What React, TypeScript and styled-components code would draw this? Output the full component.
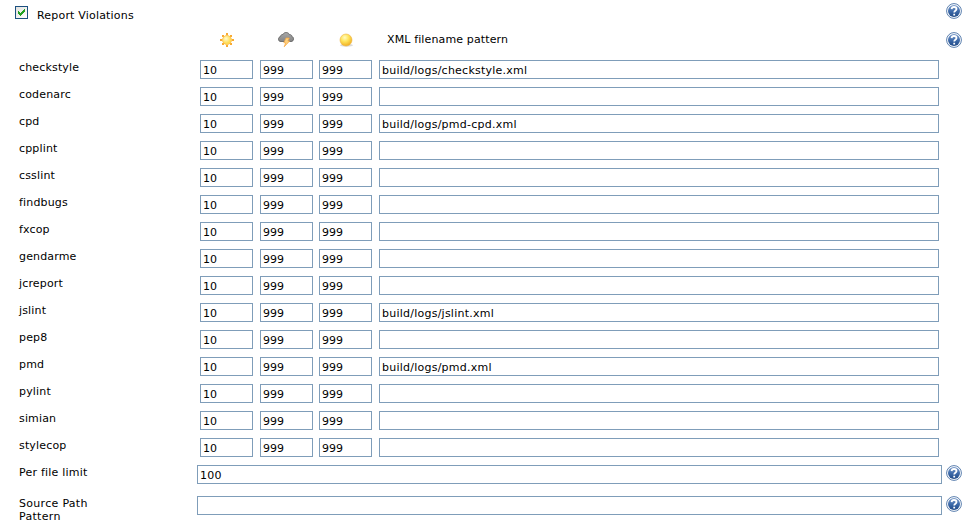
import React from "react";
import styled, { createGlobalStyle } from "styled-components";

const GlobalStyle = createGlobalStyle`
  * { box-sizing: border-box; }
  body {
    margin: 0;
    background: #fff;
    color: #000;
    font: 11px/13px Verdana, "DejaVu Sans", sans-serif;
  }
`;

const Page = styled.form`
  width: 973px;
  height: 531px;
  overflow: hidden;
`;

const TitleRow = styled.div`
  display: flex;
  align-items: flex-start;
  height: 31px;
  padding: 3px 11px 0 15px;
`;

const CheckLabel = styled.label`
  display: flex;
  flex: 1;
  gap: 9px;
  padding-top: 3px;
`;

const CheckBox = styled.input`
  appearance: none;
  width: 13px;
  height: 13px;
  margin: 0;
  border: 1px solid #1c5180;
  background: linear-gradient(135deg, #e2e2de, #fff);
  &:checked {
    background: url("data:image/svg+xml,%3Csvg xmlns='http://www.w3.org/2000/svg' width='11' height='11' shape-rendering='crispEdges'%3E%3Cpath fill='%2321a121' d='M2 4h1v3h-1zM3 5h1v3h-1zM4 6h1v3h-1zM5 5h1v3h-1zM6 4h1v3h-1zM7 3h1v3h-1zM8 2h1v3h-1z'/%3E%3C/svg%3E") no-repeat,
      linear-gradient(135deg, #e2e2de, #fff);
  }
`;

const Text = styled.span<{ $spacing?: number; $drop?: number }>`
  letter-spacing: ${(p) => p.$spacing ?? 0.16}px;
  padding-top: ${(p) => p.$drop ?? 0}px;
  white-space: pre-line;
`;

const HeaderRow = styled.div`
  display: grid;
  grid-template-columns: 199px 59px 60px 49px 1fr 16px;
  height: 29px;
  padding: 1px 11px 0 20px;
  svg { display: block; }
`;

const ToolRow = styled.div`
  display: grid;
  grid-template-columns: 181px 60px 59px 60px 560px;
  height: 27px;
  padding-left: 19px;
`;

const WideRow = styled.div`
  display: grid;
  grid-template-columns: 178px 745px 4px 16px;
  height: 31px;
  padding-left: 19px;
`;

const Field = styled.input<{ $wide?: boolean }>`
  width: ${(p) => (p.$wide ? "100%" : "53px")};
  height: 19px;
  margin: 0;
  padding: 2px 2px 0;
  border: 1px solid #7f9db9;
  border-radius: 0;
  background: #fff;
  color: #000;
  font: inherit;
  letter-spacing: ${(p) => (p.$wide ? 0.24 : 0)}px;
  outline: none;
`;

const Spacer = styled.span``;

const HelpIcon = () => (
  <svg width="16" height="16" viewBox="0 0 16 16">
    <defs>
      <linearGradient id="help" x2="0" y2="1">
        <stop stopColor="#7d9dcc" />
        <stop offset=".5" stopColor="#3f6cab" />
        <stop offset="1" stopColor="#204a87" />
      </linearGradient>
    </defs>
    <circle cx="8" cy="8" r="7.4" fill="#fff" stroke="#5b7fae" strokeWidth="1" />
    <circle cx="8" cy="8" r="6" fill="url(#help)" />
    <path d="M5.6 6.1C5.7 4.6 6.6 4 8 4s2.5.7 2.5 2c0 1.8-2.3 1.7-2.3 3.5M8.2 10.8v1.6" fill="none" stroke="#fff" strokeWidth="1.8" />
  </svg>
);

const SunIcon = () => (
  <svg width="16" height="16" viewBox="0 0 16 16">
    <defs>
      <radialGradient id="sun" cx=".4" cy=".35">
        <stop stopColor="#fffbd0" />
        <stop offset="1" stopColor="#ffdc55" />
      </radialGradient>
    </defs>
    <path
      d="M7 1h2v2H7zM7 13h2v2H7zM1 7h2v2H1zM13 7h2v2h-2zM3 3h2v2H3zM11 3h2v2h-2zM3 11h2v2H3zM11 11h2v2h-2z"
      fill="#f8a932"
    />
    <circle cx="8" cy="8" r="4.5" fill="url(#sun)" stroke="#fbc04e" strokeWidth=".9" />
  </svg>
);

const StormIcon = () => (
  <svg width="16" height="16" viewBox="0 0 16 16">
    <defs>
      <linearGradient id="cloud" x2="0" y2="1">
        <stop stopColor="#a8a8a8" />
        <stop offset="1" stopColor="#858585" />
      </linearGradient>
    </defs>
    <path
      d="M3 9.5C1.3 9.5.5 8.6.5 7.2S1.3 4.8 2.5 4.6C2.7 3 3.8 2.2 5 2.5 5.6 1 6.8.5 8.2.5s2.7.7 3.1 2.1c1.6-.2 2.6.7 2.6 2 1.1.3 1.6 1.1 1.6 2.3 0 1.6-1 2.6-2.5 2.6z"
      fill="url(#cloud)"
      stroke="#676767"
      strokeWidth=".9"
    />
    <path d="M8 6h3.3L9.9 9h1.8L6.2 14.8l1.5-4H5.8z" fill="#fdd07c" stroke="#f6a43c" strokeWidth=".7" />
  </svg>
);

const BallIcon = () => (
  <svg width="16" height="16" viewBox="0 0 16 16">
    <defs>
      <radialGradient id="ball" cx=".4" cy=".3" r=".65">
        <stop stopColor="#fffbc0" />
        <stop offset=".5" stopColor="#ffe45b" />
        <stop offset="1" stopColor="#f2b62b" />
      </radialGradient>
    </defs>
    <ellipse cx="8.5" cy="13.3" rx="6.5" ry="1.5" fill="#888" opacity=".3" />
    <circle cx="8" cy="8" r="6" fill="url(#ball)" stroke="#eeb444" strokeWidth=".6" />
  </svg>
);

const tools: { name: string; pattern?: string }[] = [
  { name: "checkstyle", pattern: "build/logs/checkstyle.xml" },
  { name: "codenarc" },
  { name: "cpd", pattern: "build/logs/pmd-cpd.xml" },
  { name: "cpplint" },
  { name: "csslint" },
  { name: "findbugs" },
  { name: "fxcop" },
  { name: "gendarme" },
  { name: "jcreport" },
  { name: "jslint", pattern: "build/logs/jslint.xml" },
  { name: "pep8" },
  { name: "pmd", pattern: "build/logs/pmd.xml" },
  { name: "pylint" },
  { name: "simian" },
  { name: "stylecop" },
];

export default function App() {
  return (
    <>
      <GlobalStyle />
      <Page>
        <TitleRow>
          <CheckLabel>
            <CheckBox type="checkbox" defaultChecked />
            <Text $drop={3} $spacing={0.19}>Report Violations</Text>
          </CheckLabel>
          <HelpIcon />
        </TitleRow>
        <HeaderRow>
          <Spacer />
          <SunIcon />
          <StormIcon />
          <BallIcon />
          <Text $drop={1} $spacing={0.13}>XML filename pattern</Text>
          <HelpIcon />
        </HeaderRow>
        {tools.map((tool) => (
          <ToolRow key={tool.name}>
            <Text $drop={1}>{tool.name}</Text>
            <Field defaultValue="10" />
            <Field defaultValue="999" />
            <Field defaultValue="999" />
            <Field $wide defaultValue={tool.pattern ?? ""} />
          </ToolRow>
        ))}
        <WideRow>
          <Text $drop={1} $spacing={0.22}>Per file limit</Text>
          <Field $wide defaultValue="100" />
          <Spacer />
          <HelpIcon />
        </WideRow>
        <WideRow>
          <Text $drop={1} $spacing={0.3}>{"Source Path\nPattern"}</Text>
          <Field $wide />
          <Spacer />
          <HelpIcon />
        </WideRow>
      </Page>
    </>
  );
}
